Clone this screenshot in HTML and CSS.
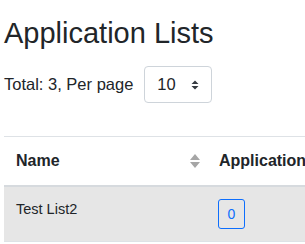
FILE: index.html
```html
<!DOCTYPE html>
<html>
<head>
<meta charset="utf-8">
<link rel="stylesheet" href="styles.css">
</head>
<body>
<div class="page">
  <h2 class="title">Application Lists</h2>
  <div class="pager">
    <span class="total">Total: 3, Per page</span>
    <div class="select">
      <span class="select-value">10</span>
      <svg class="select-arrows" width="8" height="10" viewBox="0 0 8 10"><path d="M4 0.5 L7.5 4 H0.5 Z M0.5 6 H7.5 L4 9.5 Z" fill="#343a40"/></svg>
    </div>
  </div>
  <table class="lists">
    <thead>
      <tr>
        <th class="col-name"><div class="th-inner"><span>Name</span>
          <svg class="sort" width="12" height="16" viewBox="0 0 12 16"><path d="M6 1 L11 7 H1 Z M1 9 H11 L6 15 Z" fill="#a6a6a6"/></svg></div></th>
        <th class="col-apps">Applications</th>
      </tr>
    </thead>
    <tbody>
      <tr class="active">
        <td>Test List2</td>
        <td><span class="count">0</span></td>
      </tr>
    </tbody>
  </table>
</div>
</body>
</html>
```
FILE: styles.css
```css
html, body {
  margin: 0;
  padding: 0;
  background: #fff;
  overflow: hidden;
}
body {
  font-family: "Liberation Sans", Arial, sans-serif;
  color: #212529;
}
.page {
  padding: 16px 0 0 4px;
  width: 400px;
}
.title {
  margin: 0 0 16px 0;
  font-size: 29px;
  font-weight: 400;
  line-height: 34px;
}
.pager {
  display: flex;
  align-items: center;
  gap: 11px;
  font-size: 16.5px;
}
.select {
  box-sizing: border-box;
  width: 68px;
  height: 37px;
  border: 1px solid #ced4da;
  border-radius: 4px;
  display: flex;
  align-items: center;
  padding: 0 12px 0 12px;
  justify-content: space-between;
}
.select-value {
  font-size: 16.5px;
}
.lists {
  margin-top: 33px;
  border-collapse: collapse;
  width: 400px;
  border-top: 1px solid #dee2e6;
}
.lists th {
  text-align: left;
  font-size: 16px;
  font-weight: 700;
  line-height: 24px;
  padding: 12px;
  border-bottom: 2px solid #d6dade;
}
.col-name {
  width: 179px;
}
.th-inner {
  display: flex;
  justify-content: space-between;
  align-items: center;
  margin-right: -6px;
}
.sort {
  display: block;
}
.lists td {
  vertical-align: top;
  font-size: 14.5px;
  line-height: 21px;
  padding: 12px;
  border-bottom: 1px solid #dee2e6;
}
.active td {
  background: #e6e6e6;
}
.count {
  display: inline-block;
  box-sizing: border-box;
  width: 27px;
  height: 30px;
  line-height: 28px;
  text-align: center;
  border: 1px solid #0d6efd;
  border-radius: 3px;
  color: #0d6efd;
  font-size: 14px;
  margin-left: -1px;
}
```
